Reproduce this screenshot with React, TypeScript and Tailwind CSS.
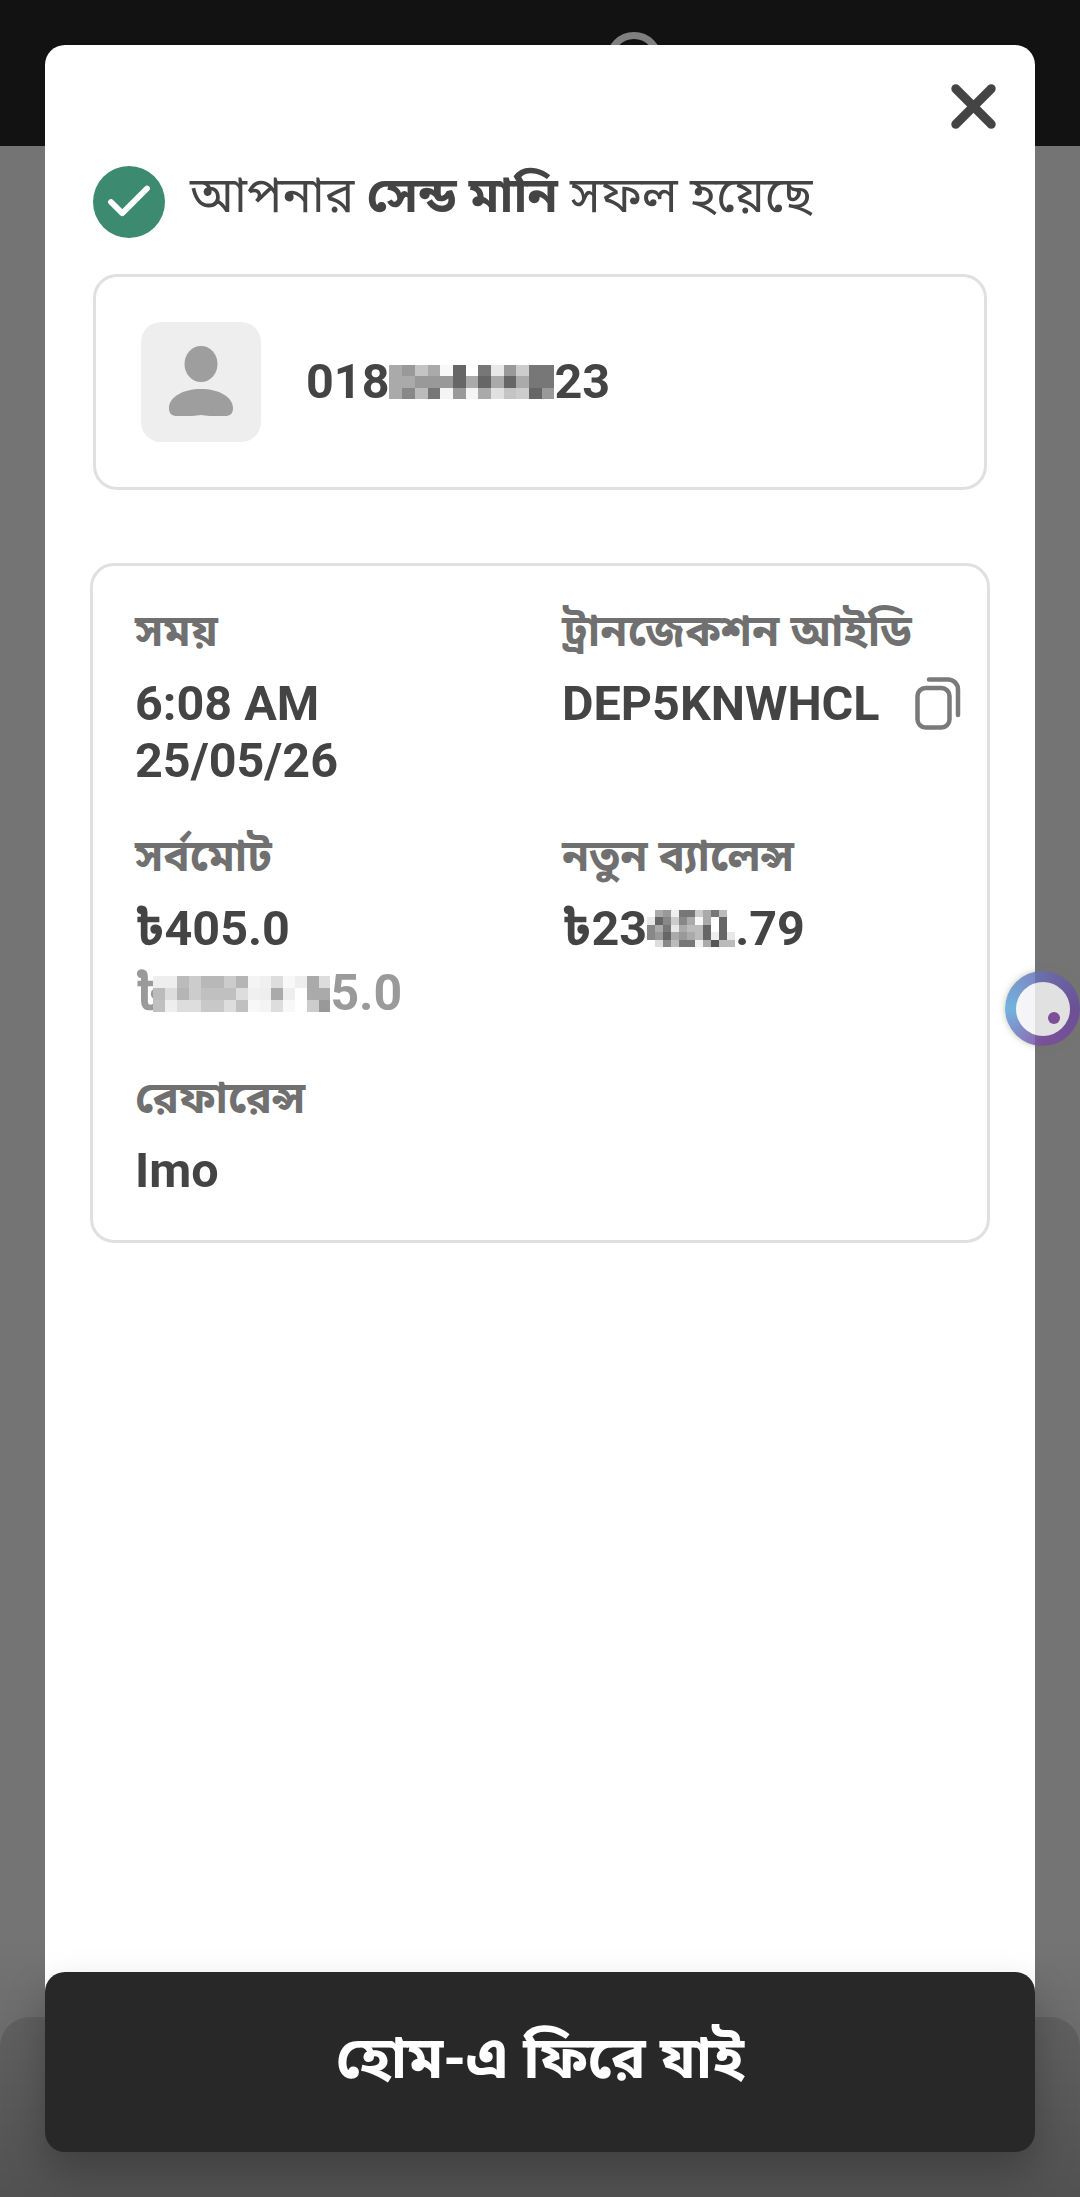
import React from 'react';
import { Check, X } from 'lucide-react';

const bn = "font-['Roboto','Noto_Sans','Noto_Sans_Bengali','Lohit_Bengali',sans-serif]";

const Mosaic = ({ cols, cell, rows, cells }: { cols: number; cell: number; rows: number; cells: string[] }) => (
  <div
    className="relative grid shrink-0"
    style={{ gridTemplateColumns: `repeat(${cols}, ${cell}px)`, gridAutoRows: `${rows}px` }}
  >
    {cells.map((c, i) => (
      <div key={i} style={{ backgroundColor: c }} />
    ))}
  </div>
);

const phone = [
  '#aaa', '#999', '#c4c4c4', '#aaa', '#f8f8f8', '#666', '#fff', '#777', '#e8e8e8', '#999', '#ccc', '#777', '#777',
  '#aaa', '#aaa', '#999', '#999', '#999', '#666', '#aaa', '#666', '#aaa', '#666', '#aaa', '#777', '#777',
  '#aaa', '#888', '#bbb', '#777', '#f4f4f4', '#999', '#f4f4f4', '#aaa', '#e0e0e0', '#c4c4c4', '#ccc', '#666', '#999',
];

const balance = [
  '#fff', '#aaa', '#999', '#eee', '#777', '#777', '#ccc', '#aaa', '#777', '#bbb', '#fff',
  '#e8e8e8', '#666', '#888', '#ccc', '#888', '#aaa', '#f8f8f8', '#aaa', '#fff', '#666', '#fff',
  '#888', '#aaa', '#777', '#e8e8e8', '#aaa', '#bbb', '#bbb', '#666', '#fff', '#666', '#fff',
  '#888', '#999', '#666', '#aaa', '#999', '#aaa', '#bbb', '#666', '#eee', '#666', '#e8e8e8',
  '#fff', '#ddd', '#888', '#bbb', '#777', '#777', '#f0f0f0', '#aaa', '#555', '#bbb', '#bbb',
];

const subtotal = [
  '#eee', '#eee', '#bbb', '#ccc', '#b8b8b8', '#b8b8b8', '#ccc', '#b5b5b5', '#f4f4f4', '#f0f0f0', '#ddd', '#f8f8f8', '#eee', '#aaa', '#ddd',
  '#bbb', '#ddd', '#b5b5b5', '#ccc', '#c0c0c0', '#c0c0c0', '#c0c0c0', '#ddd', '#f0f0f0', '#eee', '#aaa', '#eee', '#fff', '#aaa', '#aaa',
  '#c0c0c0', '#eee', '#ddd', '#ddd', '#c8c8c8', '#c8c8c8', '#ddd', '#c0c0c0', '#f8f8f8', '#f4f4f4', '#ddd', '#f8f8f8', '#fff', '#ccc', '#999',
];

const Label = ({ children }: { children: React.ReactNode }) => (
  <p className="text-[44px] leading-[44px] font-bold text-[#707070]">{children}</p>
);

export default function App() {
  return (
    <div className={`relative w-[1080px] h-[2197px] overflow-hidden bg-[#747474] ${bn}`}>
      {/* page behind the modal */}
      <div className="relative h-[146px] bg-[#121212]">
        <div className="absolute left-[606px] top-[32px] w-[56px] h-[56px] rounded-full border-[7px] border-[#808080]" />
      </div>
      <div className="absolute inset-x-0 bottom-0 h-[180px] rounded-t-[30px] bg-[#666]" />
      <div className="absolute inset-x-0 bottom-0 h-[260px] bg-gradient-to-b from-transparent to-[#00000033]" />

      {/* modal */}
      <div className="absolute inset-x-[45px] top-[45px] bottom-[45px] flex flex-col">
        <div className="flex-1 rounded-t-[20px] bg-white px-[48px] pt-[26px] pb-[20px]">
          <div className="flex justify-end">
            <X size={71} strokeWidth={3} className="text-[#444] -mr-[22px]" />
          </div>
          <div className="flex items-center gap-[25px] mt-[24px]">
            <div className="flex h-[72px] w-[72px] items-center justify-center rounded-full bg-[#3c8a70]">
              <Check size={54} strokeWidth={2.6} className="text-white" />
            </div>
            <p className="text-[49.2px] leading-[60px] -mt-[14px] text-[#444]">
              আপনার <span className="font-bold">সেন্ড মানি</span> সফল হয়েছে
            </p>
          </div>

          <div className="mt-[36px] flex h-[216px] items-center gap-[45px] rounded-[24px] border-[3px] border-[#e0e0e0] px-[45px]">
            <div className="flex h-[120px] w-[120px] items-center justify-center rounded-[20px] bg-[#eeeeee]">
              <svg width="64" height="72" viewBox="0 0 64 72">
                <ellipse cx="32" cy="18" rx="16.5" ry="18" fill="#9e9e9e" />
                <path d="M0 62C0 51 14 43 32 43S64 51 64 62C64 68 61 70 56 70H41C37 70 35 69 32 69S27 70 23 70H8C3 70 0 68 0 62Z" fill="#9e9e9e" />
              </svg>
            </div>
            <div className="flex items-center text-[48.5px] leading-[56px] font-bold text-[#444]">
              018
              <Mosaic cols={13} cell={12.7} rows={11.5} cells={phone} />
              23
            </div>
          </div>

          <div className="-mx-[3px] mt-[73px] grid h-[680px] grid-cols-[427px_1fr] rounded-[24px] border-[3px] border-[#e0e0e0] pl-[42px] pt-[43px] content-start">
            <div className="h-[225px]">
              <Label>সময়</Label>
              <div className="mt-[22px] text-[48.5px] leading-[57px] font-bold text-[#444]">
                6:08 AM
                <br />
                25/05/26
              </div>
            </div>
            <div className="h-[225px]">
              <Label>ট্রানজেকশন আইডি</Label>
              <div className="mt-[22px] flex items-center gap-[35px] text-[48.5px] leading-[57px] font-bold text-[#444]">
                DEP5KNWHCL
                <svg width="46" height="53" viewBox="0 0 46 53" fill="none" stroke="#7a7a7a" strokeWidth="4.5" strokeLinecap="round">
                  <rect x="2.5" y="11" width="32" height="39.5" rx="8" />
                  <path d="M14 2.5H33a10 10 0 0 1 10 10V38" />
                </svg>
              </div>
            </div>

            <div className="h-[242px]">
              <Label>সর্বমোট</Label>
              <div className="mt-[22px] text-[48.5px] leading-[57px] font-bold text-[#444]">৳405.0</div>
              <div className="mt-[8px] flex items-center text-[50px] leading-[57px] font-bold text-[#9a9a9a]">
                ৳
                <div className="-ml-[12px]">
                  <Mosaic cols={15} cell={11.8} rows={12} cells={subtotal} />
                </div>
                5.0
              </div>
            </div>
            <div className="h-[242px]">
              <Label>নতুন ব্যালেন্স</Label>
              <div className="mt-[22px] flex items-center text-[48.5px] leading-[57px] font-bold text-[#444]">
                ৳23
                <Mosaic cols={11} cell={8} rows={7.5} cells={balance} />
                .79
              </div>
            </div>

            <div>
              <Label>রেফারেন্স</Label>
              <div className="mt-[22px] text-[48.5px] leading-[57px] font-bold text-[#444]">Imo</div>
            </div>
          </div>
        </div>

        <button className="relative -mt-[20px] flex h-[180px] shrink-0 items-center justify-center rounded-[20px] bg-[#282828] pb-[8px] text-[58px] font-bold text-white shadow-[0_20px_40px_rgba(0,0,0,0.25)]">
          হোম-এ ফিরে যাই
        </button>
      </div>

      {/* floating assistant bubble */}
      <div className="absolute left-[1005px] top-[971px] flex h-[75px] w-[75px] items-center justify-center rounded-full bg-[conic-gradient(from_0deg,#6a6cb4,#6a4a9a_25%,#7d4aa0_50%,#5aa6d8_75%,#6a6cb4)] opacity-85 shadow-[0_0_6px_rgba(120,120,90,0.5)]">
        <div className="relative h-[54px] w-[54px] rounded-full bg-[#f4f4f6]">
          <div className="absolute left-[32px] top-[30px] h-[12px] w-[12px] rounded-full bg-[#7d4aa0]" />
        </div>
      </div>
    </div>
  );
}
